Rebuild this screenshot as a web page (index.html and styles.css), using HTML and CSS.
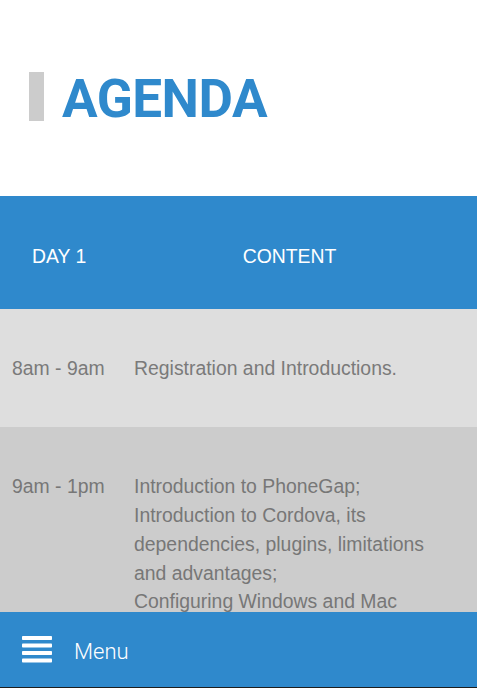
FILE: index.html
```html
<!DOCTYPE html>
<html lang="en">
<head>
<meta charset="utf-8">
<title>Agenda</title>
<link rel="stylesheet" href="styles.css">
</head>
<body>
<header class="page-head">
  <div class="title-wrap">
    <span class="title-bar"></span>
    <h1 class="title">AGENDA</h1>
  </div>
</header>
<section class="agenda">
  <div class="row row-head">
    <div class="cell cell-time head-day">DAY 1</div>
    <div class="cell cell-content head-content">CONTENT</div>
  </div>
  <div class="row row-light">
    <div class="cell cell-time">8am - 9am</div>
    <div class="cell cell-content">Registration and Introductions.</div>
  </div>
  <div class="row row-dark">
    <div class="cell cell-time">9am - 1pm</div>
    <div class="cell cell-content">Introduction to PhoneGap;<br>Introduction to Cordova, its dependencies, plugins, limitations and advantages;<br>Configuring Windows and Mac</div>
  </div>
</section>
<nav class="menu-bar">
  <svg class="menu-icon" width="30" height="27" viewBox="0 0 30 27" aria-hidden="true">
    <rect x="0" y="0" width="30" height="4" rx="0.8" fill="#fff"/>
    <rect x="0" y="7.5" width="30" height="4" rx="0.8" fill="#fff"/>
    <rect x="0" y="15" width="30" height="4" rx="0.8" fill="#fff"/>
    <rect x="0" y="22.5" width="30" height="4" rx="0.8" fill="#fff"/>
  </svg>
  <span class="menu-label">Menu</span>
</nav>
</body>
</html>
```

FILE: styles.css
```css
* { box-sizing: border-box; }

html, body {
  margin: 0;
  padding: 0;
  background: #ffffff;
}

body {
  font-family: "Liberation Sans", Arial, Helvetica, sans-serif;
}

.page-head {
  height: 196px;
  padding-top: 72px;
  padding-left: 29px;
}

.title-wrap {
  display: flex;
  align-items: flex-start;
  gap: 18px;
}

.title-bar {
  display: block;
  width: 15px;
  height: 49px;
  background: #cccccc;
}

.title {
  margin: 3px 0 0 0;
  font-family: Roboto, "Liberation Sans", Arial, sans-serif;
  font-size: 53px;
  line-height: 49px;
  font-weight: 700;
  letter-spacing: -0.5px;
  color: #2f89cc;
}

.agenda {
  font-size: 19.4px;
  line-height: 28.7px;
}

.row {
  display: grid;
  grid-template-columns: 122px 1fr;
}

.row-head {
  background: #2f89cc;
  color: #ffffff;
  padding: 46px 0 38px;
}

.row-light {
  background: #dedede;
  color: #7a7a7a;
  padding: 45px 0 45px;
}

.row-dark {
  background: #cccccc;
  color: #777777;
  padding: 45px 0 45px;
}

.cell-time {
  padding-left: 12px;
}

.cell-content {
  padding-left: 12px;
  padding-right: 30px;
}

.head-day {
  padding-left: 32px;
}

.head-content {
  padding-left: 0;
  padding-right: 20px;
  text-align: center;
}

.menu-bar {
  position: fixed;
  left: 0;
  right: 0;
  bottom: 0;
  height: 76px;
  background: #2f89cc;
  border-bottom: 1px solid #1d1d1d;
  display: flex;
  align-items: center;
  padding-left: 22px;
  gap: 22px;
}

.menu-icon {
  display: block;
  flex: none;
}

.menu-label {
  font-family: Roboto, "Liberation Sans", sans-serif;
  font-weight: 300;
  font-size: 22px;
  color: #ffffff;
  margin-top: 4px;
}
```
